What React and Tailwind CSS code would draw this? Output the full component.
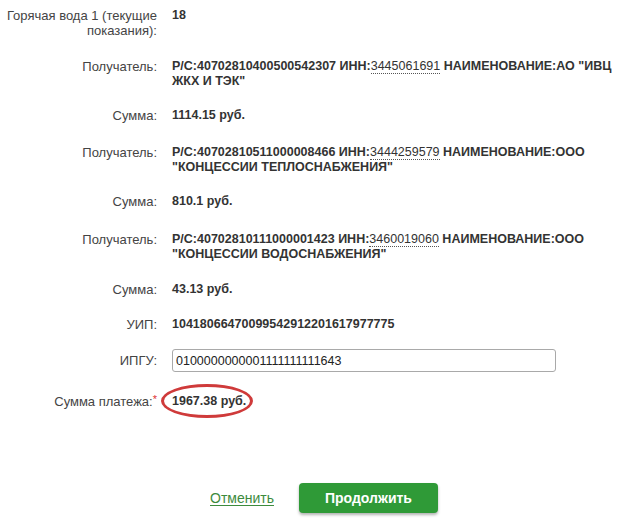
const Inn = ({ value }) => (
  <span className="font-normal border-b border-dotted border-[#555]">{value}</span>
)

const Row = ({ label, children, className = '' }) => (
  <div className={`flex ${className}`}>
    <div className="w-[158px] shrink-0 text-right text-[#444] pr-[1px]">{label}</div>
    <div className="w-[464px] pl-[14px] font-bold text-[12.5px] text-[#333]">{children}</div>
  </div>
)

const App = () => {
  return (
    <main
      className="w-[628px] h-[519px] bg-white pt-[8px] text-[13px] leading-[15px]"
      style={{ fontFamily: '"Liberation Sans", Arial, sans-serif' }}
    >
      <Row label="Горячая вода 1 (текущие показания):" className="mb-[21px]">18</Row>
      <Row label="Получатель:" className="mb-[19px]">
        Р/С:40702810400500542307 ИНН:<Inn value="3445061691" /> НАИМЕНОВАНИЕ:АО "ИВЦ ЖКХ И ТЭК"
      </Row>
      <Row label="Сумма:" className="mb-[22px]">1114.15 руб.</Row>
      <Row label="Получатель:" className="mb-[19px]">
        Р/С:40702810511000008466 ИНН:<Inn value="3444259579" /> НАИМЕНОВАНИЕ:ООО "КОНЦЕССИИ ТЕПЛОСНАБЖЕНИЯ"
      </Row>
      <Row label="Сумма:" className="mb-[23px]">810.1 руб.</Row>
      <Row label="Получатель:" className="mb-[20px]">
        Р/С:40702810111000001423 ИНН:<Inn value="3460019060" /> НАИМЕНОВАНИЕ:ООО "КОНЦЕССИИ ВОДОСНАБЖЕНИЯ"
      </Row>
      <Row label="Сумма:" className="mb-[20px]">43.13 руб.</Row>
      <Row label="УИП:" className="mb-[17px]">10418066470099542912201617977775</Row>
      <div className="flex items-center mb-[22px]">
        <div className="w-[158px] shrink-0 text-right text-[#444] pr-[1px]">ИПГУ:</div>
        <div className="pl-[14px]">
          <input
            readOnly
            value="0100000000001111111111643"
            className="w-[384px] h-[23px] px-[3px] border border-[#a9a9a9] rounded-[3px] text-[12.5px] text-[#222] bg-white outline-none"
            style={{ fontFamily: '"Liberation Sans", Arial, sans-serif' }}
          />
        </div>
      </div>
      <div className="flex">
        <div className="w-[158px] shrink-0 text-right text-[#444] pr-[1px]">
          Сумма платежа:<span className="text-[#d33] text-[11px] align-top relative -top-[2px]">*</span>
        </div>
        <div className="pl-[14px] font-bold text-[12.5px] text-[#333]">
          <span className="relative">
            1967.38 руб.
            <span className="absolute -left-[11px] -right-[7px] -top-[10px] -bottom-[10px] border-[3px] border-[#cf3a3a] rounded-[50%]" />
          </span>
        </div>
      </div>
      <div className="flex items-center pl-[210px] mt-[74px]">
        <a href="#" className="text-[14px] text-[#3d8b3d] underline underline-offset-2">Отменить</a>
        <button className="ml-[25px] w-[139px] h-[30px] rounded-[4px] bg-[#2f9a37] text-white font-bold text-[14px] shadow-[0_2px_3px_rgba(0,0,0,0.3)]">
          Продолжить
        </button>
      </div>
    </main>
  )
}

export default App
